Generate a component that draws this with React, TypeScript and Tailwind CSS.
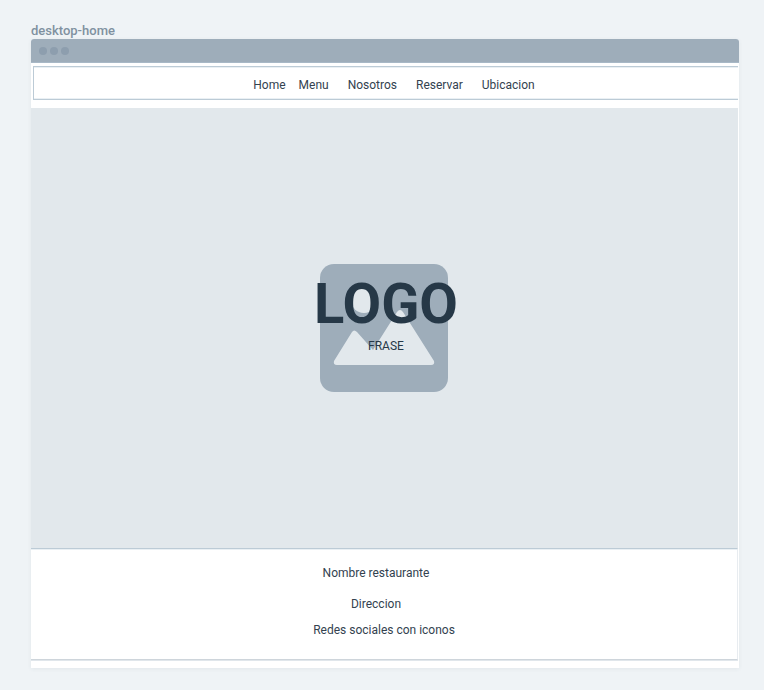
const links = ["Menu", "Nosotros", "Reservar", "Ubicacion"];

function WindowBar() {
  return (
    <div className="flex h-6 items-center gap-[3px] rounded-t-[3px] border-b border-[#a8b8c6] bg-[#9eadba] pl-2">
      <span className="size-2 rounded-full bg-[#8d9eae]" />
      <span className="size-2 rounded-full bg-[#8d9eae]" />
      <span className="size-2 rounded-full bg-[#8d9eae]" />
    </div>
  );
}

function NavBar() {
  return (
    <nav className="mt-[3px] mr-px mb-2 ml-[2px] flex h-[34px] items-center justify-center gap-[13px] border-y border-l border-[#bccbd6] pt-1 pl-4 shadow-[inset_0_1px_#eaf0f4,inset_0_-1px_#eaf0f4]">
      <a href="#home">Home</a>
      <div className="flex gap-[19px]">
        {links.map((label) => (
          <a key={label} href={"#" + label.toLowerCase()}>
            {label}
          </a>
        ))}
      </div>
    </nav>
  );
}

function PicturePlaceholder() {
  return (
    <svg viewBox="0 0 128 128" className="size-32" aria-hidden="true">
      <rect width="128" height="128" rx="14" fill="#9eadba" />
      <circle cx="44" cy="36" r="13" fill="#e2e8ec" />
      <path
        d="M14 97 L32 68 Q34 65 37 68 L53 86 L77 48 Q80 44 83 48 L114 97 Q115 101 111 101 L17 101 Q13 101 14 97 Z"
        fill="#e2e8ec"
      />
    </svg>
  );
}

function Hero() {
  return (
    <section className="relative mr-px flex min-h-[440px] items-center justify-center bg-[#e2e8ec] pr-px">
      <PicturePlaceholder />
      <div className="absolute inset-x-0 top-[166px] flex flex-col items-center pl-[3px] text-[#263847]">
        <h1 className="text-[56px] leading-[60px] font-bold">LOGO</h1>
        <p className="mt-1 text-[12px] leading-4">FRASE</p>
      </div>
    </section>
  );
}

function Footer() {
  return (
    <footer className="mr-px border-y border-r border-t-[#bccbd6] border-r-[#e8ecf0] border-b-[#ced5db] pt-4 pb-[21px] text-center shadow-[inset_0_1px_#eaf0f4,0_1px_#e0e6eb]">
      <div className="flex flex-col gap-[15px] pr-4">
        <p>Nombre restaurante</p>
        <p>Direccion</p>
      </div>
      <p className="mt-[10px]">Redes sociales con iconos</p>
    </footer>
  );
}

export default function App() {
  return (
    <main className="min-h-screen bg-[#eff3f6] pt-[22px] pr-[25px] pb-[22px] pl-[31px] font-['Roboto','Liberation_Sans',sans-serif] text-[12px] leading-4 text-[#33424f]">
      <h2 className="text-[13px] leading-[17px] font-medium text-[#8091a0]">desktop-home</h2>
      <div className="rounded-t-[3px] bg-white pb-2 shadow-[0_1px_4px_rgba(60,80,100,0.07)]">
        <WindowBar />
        <NavBar />
        <Hero />
        <Footer />
      </div>
    </main>
  );
}
